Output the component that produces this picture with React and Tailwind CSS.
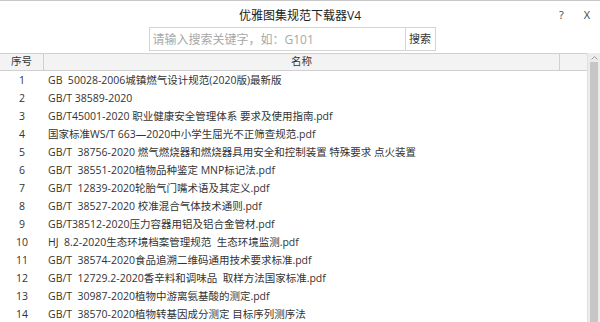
const rows = [
  'GB  50028-2006城镇燃气设计规范(2020版)最新版',
  'GB/T 38589-2020',
  'GB/T45001-2020 职业健康安全管理体系 要求及使用指南.pdf',
  '国家标准WS/T 663—2020中小学生屈光不正筛查规范.pdf',
  'GB/T  38756-2020 燃气燃烧器和燃烧器具用安全和控制装置 特殊要求 点火装置',
  'GB/T  38551-2020植物品种鉴定 MNP标记法.pdf',
  'GB/T  12839-2020轮胎气门嘴术语及其定义.pdf',
  'GB/T  38527-2020 校准混合气体技术通则.pdf',
  'GB/T38512-2020压力容器用铝及铝合金管材.pdf',
  'HJ  8.2-2020生态环境档案管理规范  生态环境监测.pdf',
  'GB/T  38574-2020食品追溯二维码通用技术要求标准.pdf',
  'GB/T  12729.2-2020香辛料和调味品  取样方法国家标准.pdf',
  'GB/T  30987-2020植物中游离氨基酸的测定.pdf',
  'GB/T  38570-2020植物转基因成分测定 目标序列测序法',
]

export default function App() {
  return (
    <div
      className="w-[600px] h-[322px] overflow-hidden bg-white border-t border-[#c8c8c8] text-[#333] flex flex-col"
      style={{ fontFamily: '"Open Sans", "Noto Sans CJK SC", sans-serif' }}
    >
      <div className="h-[26px] relative flex items-center justify-center text-[12px] text-[#222]">
        <span className="mt-[3px]">优雅图集规范下载器V4</span>
        <div className="absolute right-[10px] top-[6px] flex gap-[20px] text-[11px] text-[#444]">
          <span>?</span>
          <span>X</span>
        </div>
      </div>

      <div className="flex justify-center pr-[8px]">
        <div className="flex h-[24px] ml-[-8px]">
          <input
            className="w-[257px] h-full border border-[#d4d4d4] px-[3px] text-[12px] outline-none placeholder:text-[#a8a8a8]"
            placeholder="请输入搜索关键字，如：G101"
          />
          <button className="w-[30px] h-full border border-l-0 border-[#d4d4d4] bg-white text-[11px] text-[#333]">
            搜索
          </button>
        </div>
      </div>

      <div className="flex flex-1 min-h-0 mt-[2px]">
        <div className="flex-1 flex flex-col min-w-0">
          <div className="flex h-[24px] border-y border-[#d0d0d0] bg-[#f3f3f3] text-[10.5px]">
            <div className="w-[44px] border-r border-[#d0d0d0] flex items-center justify-center">序号</div>
            <div className="w-[516px] border-r border-[#d0d0d0] flex items-center justify-center">名称</div>
            <div className="flex-1" />
          </div>
          <div className="pt-[1px]">
            {rows.map((name, i) => (
              <div key={i} className="flex h-[18px] items-center text-[10.5px] whitespace-pre">
                <div className="w-[44px] text-center">{i + 1}</div>
                <div className="pl-[4px]">{name}</div>
              </div>
            ))}
          </div>
        </div>

        <div className="w-[13px] flex flex-col bg-[#ececec] border-l border-[#e0e0e0]">
          <div className="h-[9px] flex items-center justify-center">
            <svg width="7" height="4" viewBox="0 0 7 4">
              <path d="M0.5 3.5 L3.5 0.5 L6.5 3.5" fill="none" stroke="#a0a0a0" strokeWidth="1" />
            </svg>
          </div>
          <div className="flex-1 mx-[2px] bg-[#c6c6c6]" />
        </div>
      </div>
    </div>
  )
}
